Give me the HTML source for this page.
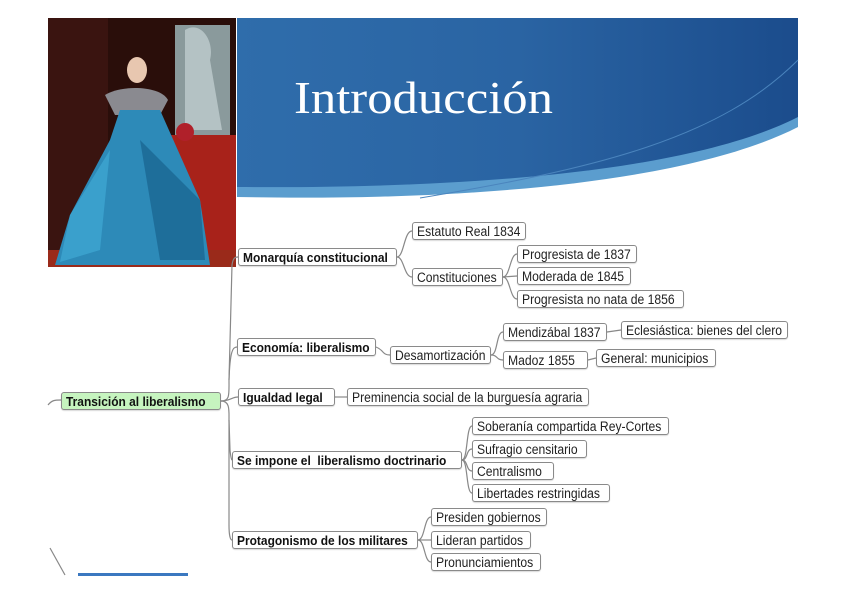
<!DOCTYPE html>
<html><head><meta charset="utf-8"><style>
body{margin:0;width:848px;height:599px;background:#fff;position:relative;overflow:hidden;font-family:"Liberation Sans",sans-serif}
.n{position:absolute;height:18px;line-height:18px;border:1px solid #8a8a8a;border-radius:3px;background:#fff;color:#222;padding:0 4px;box-sizing:border-box;white-space:nowrap;overflow:hidden;box-shadow:0 1px 1px rgba(0,0,0,.15)}
.n span{display:inline-block;font-size:13.5px;transform:scaleX(.9);transform-origin:0 50%}
.b{font-weight:bold;color:#111}
.b span{font-size:13px;transform:scaleX(.92)}
</style></head><body>
<svg width="848" height="599" style="position:absolute;left:0;top:0">
<defs>
<linearGradient id="g" x1="0" y1="0" x2="1" y2="0">
<stop offset="0" stop-color="#2f6dab"/><stop offset="0.5" stop-color="#2a64a3"/><stop offset="1" stop-color="#1b4c8c"/></linearGradient>
</defs>
<path d="M237 18 H798 V127 C700 177 500 202 237 197 Z" fill="#5b9dce"/>
<path d="M237 18 H798 V117 C700 167 500 189 237 187 Z" fill="url(#g)"/>
<path d="M420 198 C600 168 720 138 798 60" stroke="#4a84bd" stroke-width="1" fill="none"/>
<text x="294" y="113" font-family="Liberation Serif,serif" font-size="46" fill="#fff" textLength="259" lengthAdjust="spacingAndGlyphs">Introducción</text>
<rect x="48" y="18" width="188" height="249" fill="#2a0e0a"/>
<rect x="48" y="18" width="60" height="249" fill="#3a1410"/>
<rect x="175" y="25" width="55" height="110" fill="#8a9a9c"/>
<path d="M185 30 C200 20 215 40 210 60 L222 130 L185 130 Z" fill="#b4c2c4"/>
<rect x="150" y="135" width="86" height="120" fill="#a8221a"/>
<circle cx="185" cy="132" r="9" fill="#b0202a"/>
<path d="M48 250 L236 250 V267 H48 Z" fill="#9a2a1a"/>
<ellipse cx="137" cy="70" rx="10" ry="13" fill="#e8c7b0"/>
<path d="M105 95 C120 85 160 85 168 100 L160 115 L115 115 Z" fill="#8a8a90"/>
<path d="M120 110 L160 110 L200 200 L210 265 L55 265 L70 215 L110 140 Z" fill="#2d8ab8"/>
<path d="M140 140 L200 200 L205 260 L160 260 Z" fill="#1e6e9a"/>
<path d="M70 215 L110 150 L100 250 L60 262 Z" fill="#3aa0cc"/>
<g stroke="#888" stroke-width="1.2" fill="none">
<path d="M48 405 C52 400 55 400 61 400"/>
<path d="M221 401 C230 401 229 395 229 380 L232 265 C233 258 235 257 238 257"/>
<path d="M229 380 C230 350 233 347 237 347"/>
<path d="M221 401 C230 401 232 397 238 397"/>
<path d="M221 401 C230 401 229 410 229 420 L230 450 C231 460 232 460 232 460"/>
<path d="M229 420 L229 525 C229 538 231 540 232 540"/>
<path d="M397 257 C404 257 404 231 412 231"/>
<path d="M397 257 C404 257 404 277 412 277"/>
<path d="M503 277 C510 277 510 254 517 254"/>
<path d="M503 277 L517 276"/>
<path d="M503 277 C510 277 510 299 517 299"/>
<path d="M376 347 C384 350 382 355 390 355"/>
<path d="M491 355 C498 355 496 332 503 332"/>
<path d="M491 355 C498 355 496 360 503 360"/>
<path d="M607 332 L621 330"/>
<path d="M588 360 L596 358"/>
<path d="M335 397 L347 397"/>
<path d="M462 460 C468 460 466 426 472 426"/>
<path d="M462 460 C468 460 466 449 472 449"/>
<path d="M462 460 C468 460 466 471 472 471"/>
<path d="M462 460 C468 460 466 493 472 493"/>
<path d="M418 540 C425 540 424 517 431 517"/>
<path d="M418 540 L431 540"/>
<path d="M418 540 C425 540 424 562 431 562"/>
<path d="M50 548 L65 575"/>
</g>
<rect x="78" y="573" width="110" height="3" fill="#3b78c0"/>
</svg>
<div class="n b" style="left:61px;top:392px;width:160px;background:#c6f4bf"><span>Transición al liberalismo</span></div>
<div class="n b" style="left:238px;top:248px;width:159px"><span>Monarquía constitucional</span></div>
<div class="n" style="left:412px;top:222px;width:114px"><span>Estatuto Real 1834</span></div>
<div class="n" style="left:412px;top:268px;width:91px"><span>Constituciones</span></div>
<div class="n" style="left:517px;top:245px;width:120px"><span>Progresista de 1837</span></div>
<div class="n" style="left:517px;top:267px;width:114px"><span>Moderada de 1845</span></div>
<div class="n" style="left:517px;top:290px;width:167px"><span>Progresista no nata de 1856</span></div>
<div class="n b" style="left:237px;top:338px;width:139px"><span>Economía: liberalismo</span></div>
<div class="n" style="left:390px;top:346px;width:101px"><span>Desamortización</span></div>
<div class="n" style="left:503px;top:323px;width:104px"><span>Mendizábal 1837</span></div>
<div class="n" style="left:621px;top:321px;width:167px"><span>Eclesiástica: bienes del clero</span></div>
<div class="n" style="left:503px;top:351px;width:85px"><span>Madoz 1855</span></div>
<div class="n" style="left:596px;top:349px;width:120px"><span>General: municipios</span></div>
<div class="n b" style="left:238px;top:388px;width:97px"><span>Igualdad legal</span></div>
<div class="n" style="left:347px;top:388px;width:242px"><span>Preminencia social de la burguesía agraria</span></div>
<div class="n b" style="left:232px;top:451px;width:230px"><span>Se impone el&nbsp; liberalismo doctrinario</span></div>
<div class="n" style="left:472px;top:417px;width:197px"><span>Soberanía compartida Rey-Cortes</span></div>
<div class="n" style="left:472px;top:440px;width:115px"><span>Sufragio censitario</span></div>
<div class="n" style="left:472px;top:462px;width:82px"><span>Centralismo</span></div>
<div class="n" style="left:472px;top:484px;width:138px"><span>Libertades restringidas</span></div>
<div class="n b" style="left:232px;top:531px;width:186px"><span>Protagonismo de los militares</span></div>
<div class="n" style="left:431px;top:508px;width:116px"><span>Presiden gobiernos</span></div>
<div class="n" style="left:431px;top:531px;width:100px"><span>Lideran partidos</span></div>
<div class="n" style="left:431px;top:553px;width:110px"><span>Pronunciamientos</span></div>
</body></html>
